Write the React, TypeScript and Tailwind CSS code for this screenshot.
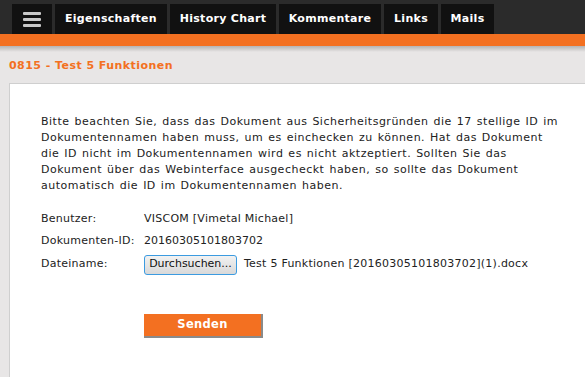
const TABS = [
  { label: "Eigenschaften", w: "w-[112px]" },
  { label: "History Chart", w: "w-[106px]" },
  { label: "Kommentare", w: "w-[102px]" },
  { label: "Links", w: "w-[54px]" },
  { label: "Mails", w: "w-[53px]" },
];

export default function App() {
  return (
    <div
      className="w-[585px] h-[377px] bg-[#e8e6e6] overflow-hidden flex flex-col text-[11px] text-[#222]"
      style={{ fontFamily: "'DejaVu Sans', Verdana, sans-serif" }}
    >
      <div className="h-[34px] bg-[#2b2b2b] flex items-end pl-[12px] gap-[3px] shrink-0">
        <div className="w-[40px] h-[30px] bg-[#111] flex flex-col items-center justify-center gap-[3px]">
          <span className="w-[18px] h-[3px] rounded-[1px] bg-[#c9c9c9]" />
          <span className="w-[18px] h-[3px] rounded-[1px] bg-[#c9c9c9]" />
          <span className="w-[18px] h-[3px] rounded-[1px] bg-[#c9c9c9]" />
        </div>
        {TABS.map((t) => (
          <div
            key={t.label}
            className={`${t.w} h-[30px] bg-[#111] flex items-center justify-center text-white font-bold text-[11px] tracking-[0.3px]`}
          >
            {t.label}
          </div>
        ))}
      </div>
      <div className="h-[12px] bg-[#f37021] shrink-0" />
      <div className="h-[6px] bg-gradient-to-b from-[#b5b3b3] to-[#e8e6e6] shrink-0" />
      <div className="pl-[9px] pt-[6px] leading-[16px] font-bold text-[#f37021] tracking-[0.45px]">
        0815 - Test 5 Funktionen
      </div>
      <div className="flex-1 ml-[9px] mt-[9px] bg-white border-l border-t border-[#cfcfcf] pl-[31px] pt-[30px]">
        <p className="w-[522px] leading-[16px] tracking-[0.5px] [word-spacing:1px]">
          Bitte beachten Sie, dass das Dokument aus Sicherheitsgründen die 17 stellige ID im Dokumentennamen haben
          muss, um es einchecken zu können. Hat das Dokument die ID nicht im Dokumentennamen wird es nicht aktzeptiert.
          Sollten Sie das Dokument über das Webinterface ausgecheckt haben, so sollte das Dokument automatisch die ID
          im Dokumentennamen haben.
        </p>
        <div className="mt-[14px] flex flex-col tracking-[0.25px]">
          <div className="flex items-center h-[22px]">
            <span className="w-[103px]">Benutzer:</span>
            <span>VISCOM [Vimetal Michael]</span>
          </div>
          <div className="flex items-center h-[22px]">
            <span className="w-[103px]">Dokumenten-ID:</span>
            <span className="tracking-normal">20160305101803702</span>
          </div>
          <div className="flex items-center h-[25px]">
            <span className="w-[103px]">Dateiname:</span>
            <button className="h-[20px] w-[93px] rounded-[3px] border border-[#3c9be0] bg-gradient-to-b from-[#f2f2f2] to-[#d9d9d9] text-[11px] text-[#111] tracking-normal flex items-center justify-center">
              Durchsuchen...
            </button>
            <span className="ml-[7px]">Test 5 Funktionen [20160305101803702](1).docx</span>
          </div>
        </div>
        <div className="mt-[37px] ml-[103px]">
          <button className="w-[119px] h-[24px] bg-[#f37021] border-r-2 border-b-2 border-[#8a8a8a] text-white font-bold text-[11.5px] tracking-[0.3px] flex items-center justify-center">
            Senden
          </button>
        </div>
      </div>
    </div>
  );
}
